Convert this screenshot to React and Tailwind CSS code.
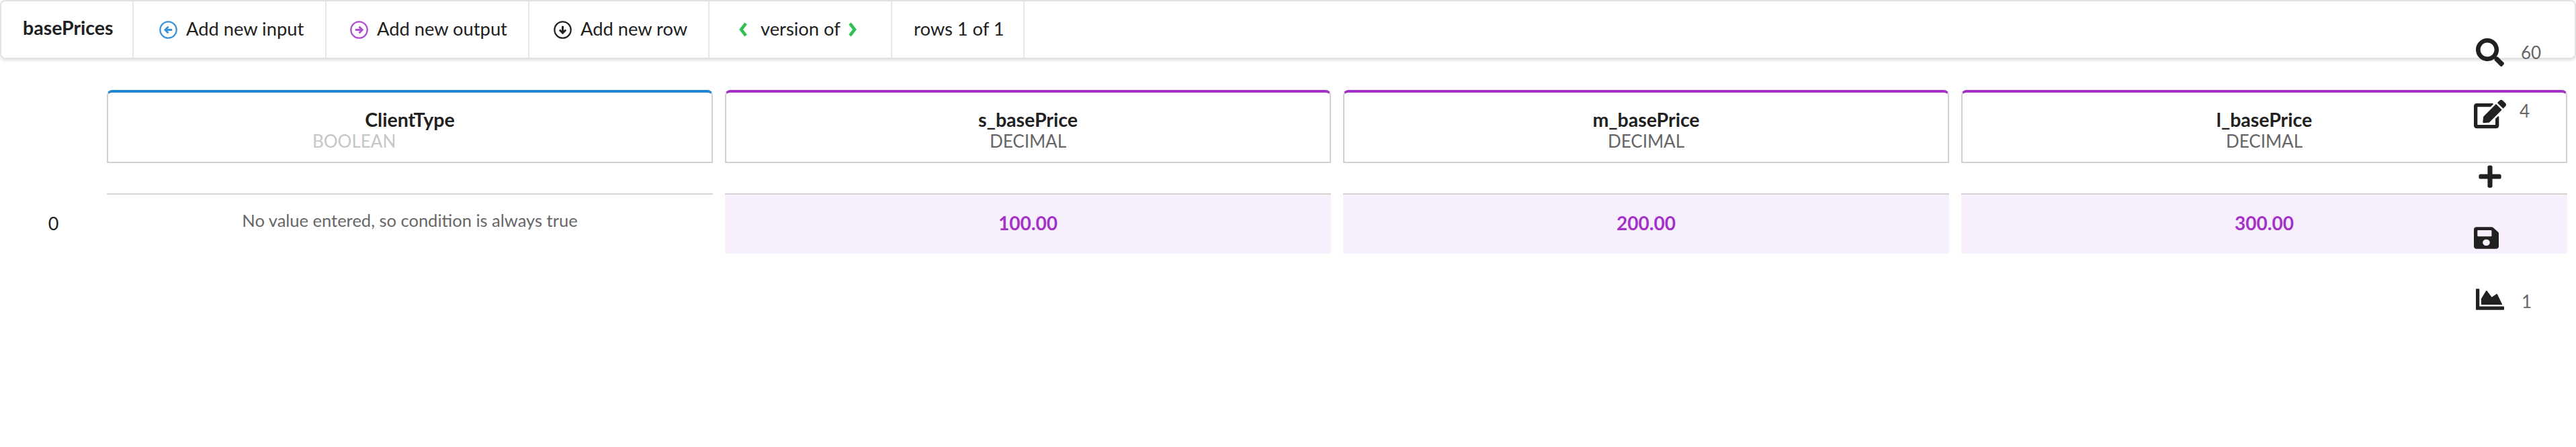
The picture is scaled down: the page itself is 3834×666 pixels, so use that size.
import React from "react";
import { FaSearch, FaEdit, FaPlus, FaSave, FaChartArea } from "react-icons/fa";

function CircleArrow({ dir, color }) {
  const d =
    dir === "left"
      ? "M18.5 13H9M13 8.5L8.5 13l4.5 4.5"
      : dir === "right"
      ? "M7.5 13H17M13 8.5l4.5 4.5-4.5 4.5"
      : "M13 7.5V17M8.5 13l4.5 4.5 4.5-4.5";
  return (
    <svg width="27" height="27" viewBox="0 0 26 26" fill="none" className="shrink-0">
      <circle cx="13" cy="13" r="11.7" stroke={color} strokeWidth="2.2" />
      <path d={d} stroke={color} strokeWidth="2.8" />
    </svg>
  );
}

function Chevron({ left }) {
  return (
    <svg width="14" height="24" viewBox="0 0 14 24" fill="none" className="shrink-0">
      <path d={left ? "M11 3L4 12l7 9" : "M3 3l7 9-7 9"} stroke="#2fbf55" strokeWidth="4.5" />
    </svg>
  );
}

function Item({ className = "", children }) {
  return (
    <div className={"flex h-full items-center border-r-2 border-[#e7e7e7] text-[#212121] " + className}>
      {children}
    </div>
  );
}

function Head({ title, type, blue }) {
  return (
    <div
      className={
        "flex h-[109px] flex-col items-center rounded-t-[8px] border-2 border-t-4 border-[#d0d0d0] pt-[24px] " +
        (blue ? "border-t-[#2185d0]" : "border-t-[#a333c8]")
      }
    >
      <div className="text-[28.5px] leading-[32px] font-bold text-[#212121]">{title}</div>
      {blue ? (
        <div className="w-full pl-[304px] text-[26px] leading-[32px] text-[#c6c6c6]">{type}</div>
      ) : (
        <div className="text-[26px] leading-[32px] text-[#666666]">{type}</div>
      )}
    </div>
  );
}

function Value({ children }) {
  return (
    <div className="flex h-[90px] items-center justify-center border-t-2 border-[#d4d4d4] bg-[#f7effc] pb-[4px] text-[28px] font-bold text-[#a333c8]">
      {children}
    </div>
  );
}

function Side({ icon, count, className = "", countClass = "" }) {
  return (
    <div className={"flex items-center " + className}>
      {icon}
      {count && <span className={"text-[26px] leading-none text-[#666666] " + countClass}>{count}</span>}
    </div>
  );
}

export default function App() {
  return (
    <div className="relative h-[666px] w-[3834px] overflow-hidden bg-white font-['Lato','Open_Sans',sans-serif]">
      <div className="flex h-[88px] items-center rounded-[8px] border-2 border-[#e2e2e2] text-[27.3px] shadow-[0_2px_4px_rgba(34,36,38,0.15)]">
        <Item className="w-[197px] pl-[32px] text-[28.5px] font-bold"><span className="-mt-[6px]">basePrices</span></Item>
        <Item className="w-[287px] gap-[13px] pl-[38px]">
          <CircleArrow dir="left" color="#3a93d8" />
          <span className="-mt-[2px]">Add new input</span>
        </Item>
        <Item className="w-[302px] gap-[13px] pl-[35px]">
          <CircleArrow dir="right" color="#ad4fd0" />
          <span className="-mt-[2px]">Add new output</span>
        </Item>
        <Item className="w-[268px] gap-[13px] pl-[36px]">
          <CircleArrow dir="down" color="#212121" />
          <span className="-mt-[2px]">Add new row</span>
        </Item>
        <Item className="w-[272px] pl-[43px]">
          <Chevron left />
          <span className="ml-[19px] mr-[11px] -mt-[2px]">version of</span>
          <Chevron />
        </Item>
        <Item className="w-[197px] pl-[32px]"><span className="-mt-[2px]">rows 1 of 1</span></Item>
      </div>

      <div className="mt-[46px] grid grid-cols-4 gap-[18px] pl-[159px] pr-[13px]">
        <Head title="ClientType" type="BOOLEAN" blue />
        <Head title="s_basePrice" type="DECIMAL" />
        <Head title="m_basePrice" type="DECIMAL" />
        <Head title="l_basePrice" type="DECIMAL" />
      </div>

      <div className="mt-[45px] flex pr-[13px]">
        <div className="flex h-[90px] w-[159px] shrink-0 items-center justify-center text-[27px] text-[#212121]">0</div>
        <div className="grid flex-1 grid-cols-4 gap-[18px]">
          <div className="h-[90px] border-t-2 border-[#d4d4d4] pt-[23px] text-center text-[25.5px] leading-[30px] text-[#666666]">
            No value entered, so condition is always true
          </div>
          <Value>100.00</Value>
          <Value>200.00</Value>
          <Value>300.00</Value>
        </div>
      </div>

      <div className="absolute left-[3682px] top-[57px] flex flex-col items-start text-[#212121]">
        <Side className="h-[42px] gap-[25px] pl-[3px]" icon={<FaSearch size={42} />} count="60" />
        <Side className="mt-[49px] h-[43px] gap-[20px]" icon={<FaEdit size={48} />} count="4" countClass="-mt-[10px]" />
        <Side className="mt-[53px] h-[37px] pl-[5px]" icon={<FaPlus size={38} />} />
        <Side className="mt-[55px] h-[37px]" icon={<FaSave size={37} preserveAspectRatio="none" />} />
        <Side className="mt-[57px] h-[32px] gap-[26px] pl-[3px]" icon={<FaChartArea size={42} />} count="1" countClass="mt-[6px]" />
      </div>
    </div>
  );
}
